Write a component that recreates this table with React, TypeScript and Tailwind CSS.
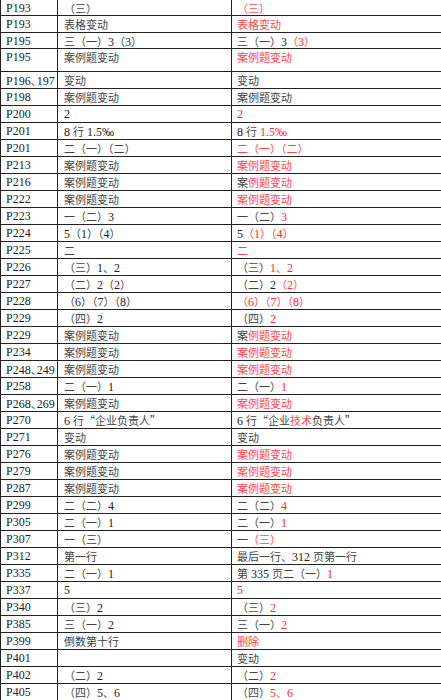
import React from 'react';

type Seg = [string, boolean?];

interface Row {
  page: string;
  before: string;
  after: Seg[];
  h?: string;
}

const rows: Row[] = [
  { page: 'P193', before: '（三）', after: [['（三）', true]], h: 'h-[16px]' },
  { page: 'P193', before: '表格变动', after: [['表格变动', true]] },
  { page: 'P195', before: '三（一）3（3）', after: [['三（一）3'], ['（3）', true]], h: 'h-[16px]' },
  { page: 'P195', before: '案例题变动', after: [['案例题变动', true]], h: 'h-[23px]' },
  { page: 'P196、197', before: '变动', after: [['变动']] },
  { page: 'P198', before: '案例题变动', after: [['案例题变动']] },
  { page: 'P200', before: '2', after: [['2', true]] },
  { page: 'P201', before: '8 行 1.5‰', after: [['8 行 '], ['1.5‰', true]] },
  { page: 'P201', before: '二（一）（二）', after: [['二（一）（二）', true]] },
  { page: 'P213', before: '案例题变动', after: [['案例题变动', true]] },
  { page: 'P216', before: '案例题变动', after: [['案'], ['例题变动', true]] },
  { page: 'P222', before: '案例题变动', after: [['案例题变动', true]] },
  { page: 'P223', before: '一（二）3', after: [['一（二）'], ['3', true]] },
  { page: 'P224', before: '5（1）（4）', after: [['5'], ['（1）（4）', true]] },
  { page: 'P225', before: '二', after: [['二', true]] },
  { page: 'P226', before: '（三）1、2', after: [['（三）'], ['1、2', true]] },
  { page: 'P227', before: '（二）2（2）', after: [['（二）2'], ['（2）', true]] },
  { page: 'P228', before: '（6）（7）（8）', after: [['（6）（7）（8）', true]] },
  { page: 'P229', before: '（四）2', after: [['（四）'], ['2', true]] },
  { page: 'P229', before: '案例题变动', after: [['案'], ['例题变动', true]] },
  { page: 'P234', before: '案例题变动', after: [['案例题变动', true]] },
  { page: 'P248、249', before: '案例题变动', after: [['案例题变动', true]] },
  { page: 'P258', before: '二（一）1', after: [['二（一）'], ['1', true]] },
  { page: 'P268、269', before: '案例题变动', after: [['案例题变动', true]] },
  { page: 'P270', before: '6 行“企业负责人”', after: [['6 行“企业'], ['技术', true], ['负责人”']] },
  { page: 'P271', before: '变动', after: [['变动']] },
  { page: 'P276', before: '案例题变动', after: [['案例题变动', true]] },
  { page: 'P279', before: '案例题变动', after: [['案例题变动', true]] },
  { page: 'P287', before: '案例题变动', after: [['案例题变动', true]] },
  { page: 'P299', before: '二（二）4', after: [['二（二）'], ['4', true]] },
  { page: 'P305', before: '二（一）1', after: [['二（一）'], ['1', true]] },
  { page: 'P307', before: '一（三）', after: [['一'], ['（三）', true]] },
  { page: 'P312', before: '第一行', after: [['最后一行、312 页第一行']] },
  { page: 'P335', before: '二（一）1', after: [['第 335 页二（一）'], ['1', true]] },
  { page: 'P337', before: '5', after: [['5', true]] },
  { page: 'P340', before: '（三）2', after: [['（三）'], ['2', true]] },
  { page: 'P385', before: '三（一）2', after: [['三（一）'], ['2', true]] },
  { page: 'P399', before: '倒数第十行', after: [['删除', true]] },
  { page: 'P401', before: '', after: [['变动']] },
  { page: 'P402', before: '（二）2', after: [['（二）'], ['2', true]] },
  { page: 'P405', before: '（四）5、6', after: [['（四）'], ['5、6', true]] },
];

const CJK = /([\u3000-\u9fff\uff00-\uffef“”]+)/;

// CJK runs (and the wide quotes) set a touch smaller than the Latin digits
const mixed = (text: string, tight = false) =>
  text.split(CJK).map((part, i) =>
    i % 2 === 1 ? (
      <span
        key={i}
        className={`font-['Noto_Sans_CJK_SC',sans-serif] text-[11px] opacity-85 ${tight ? 'tracking-[-5px]' : ''}`}
      >
        {part}
      </span>
    ) : (
      part
    )
  );

export default function App() {
  return (
    <div className="w-[441px] h-[700px] overflow-hidden bg-white font-['Liberation_Serif',serif] text-[12px] leading-[16px] text-[#222]">
      <div className="w-[560px] border-l border-[#222]">
        {rows.map((row, i) => (
          <div
            key={i}
            className={`flex items-start border-b border-[#222] ${row.h ?? 'h-[17px]'}`}
          >
            <div className="w-[57px] h-full shrink-0 border-r border-[#222] pl-[5px] whitespace-nowrap overflow-hidden">
              {mixed(row.page, true)}
            </div>
            <div className="w-[174px] h-full shrink-0 border-r border-[#222] pl-[6px] whitespace-nowrap">
              {mixed(row.before)}
            </div>
            <div className="flex-1 h-full pl-[5px] whitespace-nowrap">
              {row.after.map(([text, red], j) => (
                <span key={j} className={red ? 'text-[#ff2a2a]' : ''}>
                  {mixed(text)}
                </span>
              ))}
            </div>
          </div>
        ))}
      </div>
    </div>
  );
}
